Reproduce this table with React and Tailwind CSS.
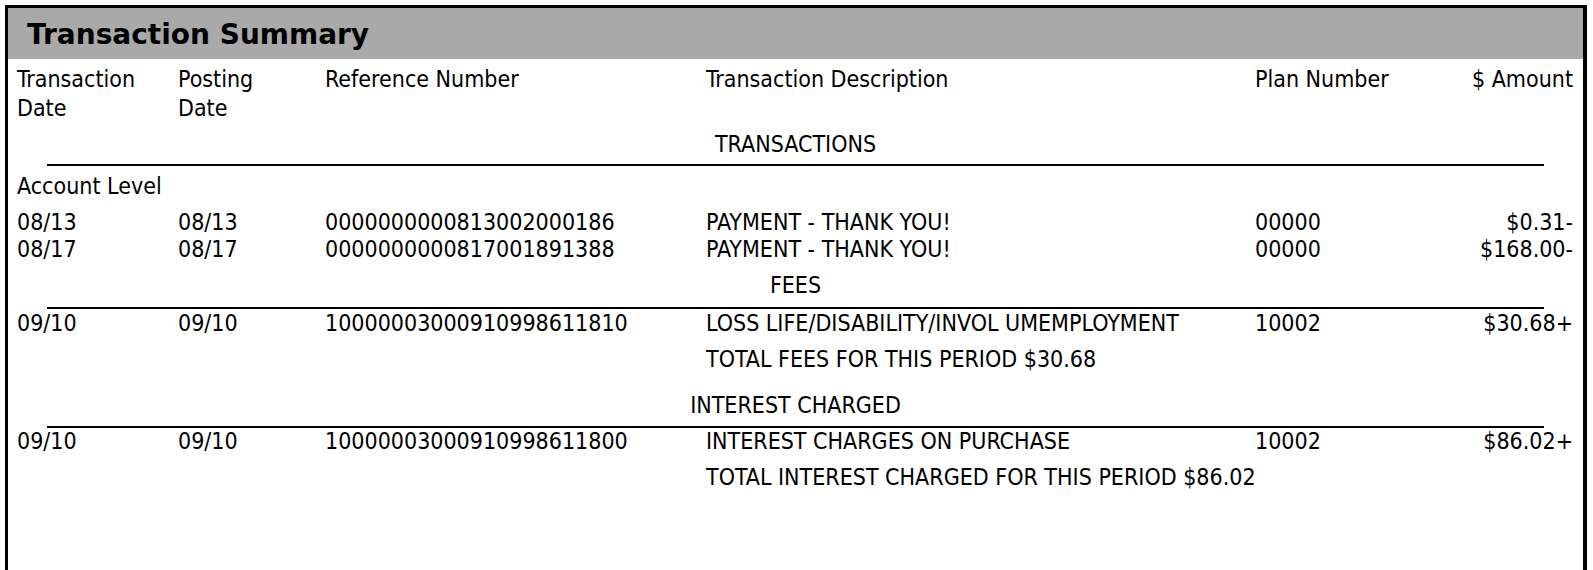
const rows = [
  { kind: 'title', text: 'TRANSACTIONS', mt: 'mt-[8px]' },
  { kind: 'rule', mt: 'mt-[6px]' },
  { kind: 'label', text: 'Account Level', mt: 'mt-[7px]' },
  { kind: 'row', mt: 'mt-[9px]', cells: ['08/13', '08/13', '0000000000813002000186', 'PAYMENT - THANK YOU!', '00000', '$0.31-'] },
  { kind: 'row', mt: 'mt-0', cells: ['08/17', '08/17', '0000000000817001891388', 'PAYMENT - THANK YOU!', '00000', '$168.00-'] },
  { kind: 'title', text: 'FEES', mt: 'mt-[9px]' },
  { kind: 'rule', mt: 'mt-[8px]' },
  { kind: 'row', mt: 'mt-[1px]', cells: ['09/10', '09/10', '10000003000910998611810', 'LOSS LIFE/DISABILITY/INVOL UMEMPLOYMENT', '10002', '$30.68+'] },
  { kind: 'row', mt: 'mt-[9px]', cells: ['', '', '', 'TOTAL FEES FOR THIS PERIOD $30.68', '', ''] },
  { kind: 'title', text: 'INTEREST CHARGED', mt: 'mt-[19px]' },
  { kind: 'rule', mt: 'mt-[7px]' },
  { kind: 'row', mt: 'mt-0', cells: ['09/10', '09/10', '10000003000910998611800', 'INTEREST CHARGES ON PURCHASE', '10002', '$86.02+'] },
  { kind: 'row', mt: 'mt-[9px]', cells: ['', '', '', 'TOTAL INTEREST CHARGED FOR THIS PERIOD $86.02', '', ''] },
]

const grid = 'grid grid-cols-[161px_147px_381px_549px_1fr_140px] pl-[9px] pr-[10px]'

function Row({ cells, mt }) {
  return (
    <div className={`${grid} ${mt} leading-[27px]`}>
      {cells.map((c, i) => (
        <div key={i} className={`whitespace-nowrap ${i === 5 ? 'text-right' : ''}`}>
          {c}
        </div>
      ))}
    </div>
  )
}

export default function App() {
  return (
    <div className="bg-white w-[1593px] h-[570px] overflow-hidden pt-[5px] text-black [font-family:'DejaVu_Sans_Condensed','DejaVu_Sans',sans-serif] [font-stretch:condensed] text-[23px]">
      <div className="ml-[5px] w-[1582px] min-h-[600px] border-t-[3px] border-l-[3px] border-r-[4px] border-black">
        {/* Header */}
        <div className="h-[51px] bg-[#a9a9a9] pl-[19px] flex items-center pt-[3px]">
          <span className="[font-family:'DejaVu_Sans',sans-serif] [font-stretch:normal] text-[28px] font-bold leading-none">
            Transaction Summary
          </span>
        </div>

        {/* Column headings */}
        <div className={`${grid} pt-[6px] leading-[29px] whitespace-nowrap`}>
          <div>Transaction<br />Date</div>
          <div>Posting<br />Date</div>
          <div>Reference Number</div>
          <div>Transaction Description</div>
          <div>Plan Number</div>
          <div className="text-right">$ Amount</div>
        </div>

        {rows.map((r, i) => {
          if (r.kind === 'title')
            return (
              <div key={i} className={`${r.mt} text-center leading-[27px]`}>
                {r.text}
              </div>
            )
          if (r.kind === 'rule')
            return <div key={i} className={`${r.mt} mx-auto w-[95%] h-[2px] bg-black`} />
          if (r.kind === 'label')
            return (
              <div key={i} className={`${r.mt} pl-[9px] leading-[27px]`}>
                {r.text}
              </div>
            )
          return <Row key={i} cells={r.cells} mt={r.mt} />
        })}
      </div>
    </div>
  )
}
